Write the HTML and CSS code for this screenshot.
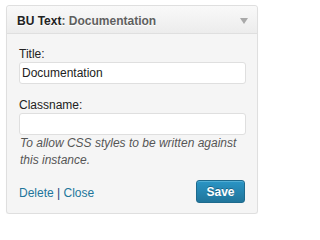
FILE: index.html
```html
<!DOCTYPE html>
<html>
<head>
<meta charset="utf-8">
<link rel="stylesheet" href="styles.css">
</head>
<body>
<div class="widget">
  <div class="widget-top">
    <div class="widget-title">BU Text<span class="colon">:</span> <span class="in-title">Documentation</span></div>
    <span class="arrow"></span>
  </div>
  <div class="widget-inside">
    <label class="label">Title:</label>
    <input class="field" type="text" value="Documentation">
    <label class="label label-gap">Classname:</label>
    <input class="field" type="text" value="">
    <p class="help">To allow CSS styles to be written against this instance.</p>
    <div class="controls">
      <div class="links"><a class="link">Delete</a> <span class="sep">|</span> <a class="link">Close</a></div>
      <button class="save">Save</button>
    </div>
  </div>
</div>
</body>
</html>
```
FILE: styles.css
```css
html, body {
  margin: 0;
  padding: 0;
  background: #ffffff;
}
body {
  font-family: "Liberation Sans", Arial, sans-serif;
  font-size: 12px;
  color: #333;
}
.widget {
  margin: 5px 0 0 6px;
  width: 250px;
  border: 1px solid #dfdfdf;
  border-radius: 3px;
  background: #f5f5f5;
  box-shadow: 0 1px 1px rgba(0,0,0,0.04);
}
.widget-top {
  height: 27px;
  display: flex;
  align-items: center;
  justify-content: space-between;
  padding: 0 9px 0 10px;
  background: linear-gradient(#f9f9f9, #ececec);
  border-bottom: 1px solid #dfdfdf;
  border-radius: 3px 3px 0 0;
}
.widget-title {
  font-weight: bold;
  font-size: 12px;
  color: #222;
  line-height: 16px;
  padding-top: 2px;
  text-shadow: 0 1px 0 #fff;
}
.colon, .in-title {
  color: #5f5f5f;
}
.arrow {
  width: 0;
  height: 0;
  border-left: 4px solid transparent;
  border-right: 4px solid transparent;
  border-top: 6px solid #a9a9a9;
  margin-top: 3px;
}
.widget-inside {
  padding: 12px 11px 10px 12px;
  display: flex;
  flex-direction: column;
}
.label {
  display: block;
  line-height: 16px;
  color: #222;
}
.label-gap {
  margin-top: 13px;
}
.field {
  box-sizing: border-box;
  width: 227px;
  height: 22px;
  margin: 0;
  padding: 0 2px;
  border: 1px solid #dfdfdf;
  border-radius: 3px;
  background: #fff;
  font-family: "Liberation Sans", Arial, sans-serif;
  font-size: 12px;
  color: #222;
  outline: none;
}
.help {
  margin: 0;
  line-height: 17px;
  font-style: italic;
  color: #555;
  padding-left: 1px;
}
.controls {
  display: flex;
  justify-content: space-between;
  align-items: center;
  margin-top: 11px;
  padding-right: 1px;
}
.links {
  line-height: 17px;
  padding-top: 3px;
}
.link {
  color: #21759b;
  text-decoration: none;
}
.sep {
  color: #21417b;
}
.save {
  box-sizing: border-box;
  width: 49px;
  height: 23px;
  margin: 0;
  padding: 0;
  border: 1px solid #1e6a8d;
  border-radius: 3px;
  background: linear-gradient(#2a95c5, #21759b);
  color: #fff;
  font-family: "Liberation Sans", Arial, sans-serif;
  font-size: 12px;
  font-weight: bold;
  text-shadow: 0 -1px 0 rgba(0,0,0,0.3);
  box-shadow: inset 0 1px 0 rgba(120,200,230,0.5);
}
```
